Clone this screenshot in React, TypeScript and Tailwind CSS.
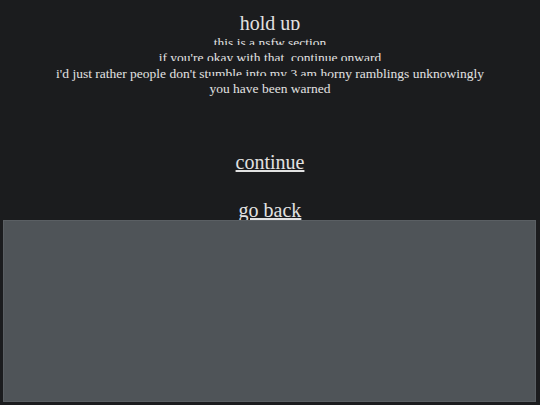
import React from 'react';

const LINES = [
  'this is a nsfw section',
  "if you're okay with that, continue onward",
  "i'd just rather people don't stumble into my 3 am horny ramblings unknowingly",
  'you have been warned',
];

export default function App() {
  return (
    <div className="w-[540px] min-h-[405px] bg-[#1b1c1e] text-[#e2e2e2] flex flex-col items-center font-['Liberation_Serif','Times_New_Roman',serif]">
      {/* Heading */}
      <div className="relative w-fit bg-[#1b1c1e] mt-[11px] text-[20px] leading-[24px]">hold up</div>

      {/* Stacked warning lines, each one laid over the bottom of the previous */}
      {LINES.map((line, i) => (
        <div
          key={i}
          className={`relative w-fit bg-[#1b1c1e] text-[13.5px] leading-[25px] ${i === 0 ? '-mt-[5px]' : '-mt-[9.6px]'}`}
        >
          {line}
        </div>
      ))}

      {/* Links */}
      <a href="#" className="relative mt-[48.4px] text-[20px] leading-[24px] underline">
        continue
      </a>
      <a href="#" className="relative mt-[24px] text-[20px] leading-[24px] underline">
        go back
      </a>

      {/* Embedded frame */}
      <div className="relative self-start ml-[3px] -mt-[1.6px] w-[533px] h-[182px] bg-[#4f5458] border border-[#5a5f63]" />
    </div>
  );
}
